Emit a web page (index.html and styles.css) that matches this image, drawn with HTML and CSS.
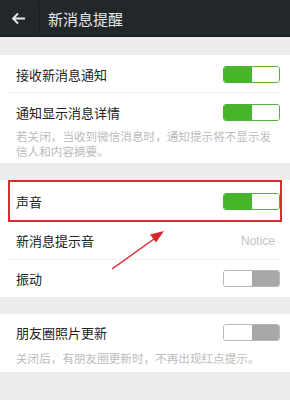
FILE: index.html
```
<!DOCTYPE html>
<html lang="zh-CN">
<head>
    <meta charset="UTF-8">
    <meta name="viewport" content="width=device-width, initial-scale=1.0">
    <title>新消息提醒</title>
    <link rel="stylesheet" href="styles.css">
</head>
<body>
    <header class="topbar">
        <div class="back">
            <svg width="15" height="13" viewBox="0 0 15 13">
                <path d="M14 6.5H2M7 1.5L2 6.5l5 5" fill="none" stroke="#e8e8e8" stroke-width="1.8"/>
            </svg>
        </div>
        <div class="title">新消息提醒</div>
    </header>

    <main class="page">
        <!-- 通知 -->
        <section class="group">
            <div class="row row-first">
                <span class="label">接收新消息通知</span>
                <span class="switch on"><i></i><i></i></span>
            </div>
            <div class="row row-top">
                <span class="label">通知显示消息详情</span>
                <span class="switch on"><i></i><i></i></span>
            </div>
            <p class="desc">若关闭，当收到微信消息时，通知提示将不显示发信人和内容摘要。</p>
        </section>

        <!-- 声音 -->
        <section class="group">
            <div class="row row-mark">
                <span class="label">声音</span>
                <span class="switch on"><i></i><i></i></span>
            </div>
            <div class="row">
                <span class="label">新消息提示音</span>
                <span class="value">Notice</span>
            </div>
            <div class="row row-last">
                <span class="label">振动</span>
                <span class="switch off"><i></i><i></i></span>
            </div>
            <svg class="pointer" width="60" height="46" viewBox="0 0 60 46">
                <path d="M2 44L44 14" stroke="#d8262c" stroke-width="1.5" fill="none"/>
                <path d="M54 6L40 9.5l6 8z" fill="#d8262c"/>
            </svg>
        </section>

        <!-- 朋友圈 -->
        <section class="group">
            <div class="row row-sub">
                <span class="label">朋友圈照片更新</span>
                <span class="switch off"><i></i><i></i></span>
            </div>
            <p class="desc desc-sub">关闭后，有朋友圈更新时，不再出现红点提示。</p>
        </section>
    </main>
</body>
</html>
```

FILE: styles.css
```
body {
    margin: 0;
    padding: 0;
    background: #ececec;
    font-family: "Noto Sans CJK SC", "Noto Sans", sans-serif;
    color: #222;
}

.topbar {
    height: 37px;
    background: #22272a;
    display: flex;
    align-items: center;
    border-bottom: 1px solid #151819;
    box-sizing: border-box;
}

.back {
    width: 40px;
    height: 31px;
    display: flex;
    align-items: center;
    justify-content: center;
    border-right: 1px solid #1a1e20;
    box-sizing: border-box;
    padding-right: 2px;
}

.title {
    color: #e6e6e6;
    font-size: 15px;
    margin-left: 8px;
}

.page {
    padding-top: 18px;
}

.group {
    background: #fff;
    margin-bottom: 17px;
    position: relative;
}

.row {
    height: 38px;
    margin: 0 8px;
    padding: 0 2px 0 8px;
    display: flex;
    align-items: center;
    justify-content: space-between;
    border-bottom: 1px solid #efefef;
    box-sizing: border-box;
}

.row-first {
    padding-top: 2px;
}

.row-top {
    height: 32px;
    padding-top: 6px;
    border-bottom: none;
}

.row-sub {
    height: 35px;
    padding-top: 1px;
    border-bottom: none;
}

.row-mark {
    height: 42px;
    margin-top: 1px;
    border: 2px solid #dc2a2e;
    padding-left: 6px;
    padding-right: 0;
}

.row-last {
    height: 37px;
    border-bottom: none;
}

.label {
    font-size: 13px;
}

.value {
    font-family: "Liberation Sans", Arial, sans-serif;
    font-size: 12px;
    color: #c4c4c4;
    margin-right: 5px;
}

.desc {
    margin: 0;
    padding: 4px 10px 4px 16px;
    font-size: 11.6px;
    line-height: 15px;
    color: #bcbcbc;
}

.desc-sub {
    padding-top: 2px;
    padding-bottom: 6px;
}

.switch {
    width: 57px;
    height: 17px;
    display: flex;
    border: 1px solid #b8b8b8;
    border-radius: 3px;
    overflow: hidden;
    box-sizing: border-box;
}

.switch i {
    flex: 1;
    background: #fff;
}

.switch.on {
    border-color: #4fb436;
}

.switch.on i:first-child {
    background: #47b52a;
}

.switch.off i:last-child {
    background: #a8a8a8;
}

.pointer {
    position: absolute;
    left: 110px;
    top: 45px;
}
```
